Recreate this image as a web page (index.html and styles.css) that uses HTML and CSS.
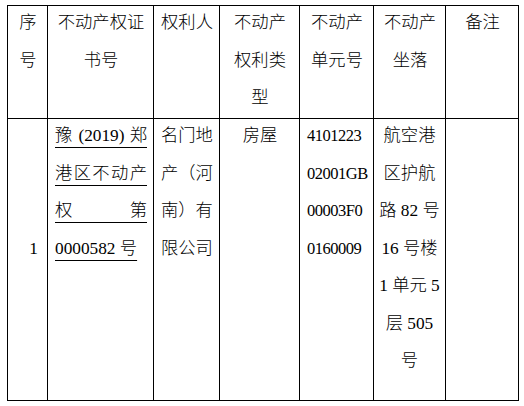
FILE: index.html
```html
<!DOCTYPE html>
<html lang="zh-CN">
<head>
<meta charset="utf-8">
<title>不动产权登记表</title>
<link rel="stylesheet" href="styles.css">
</head>
<body>
<table class="reg">
  <colgroup>
    <col class="c-seq">
    <col class="c-cert">
    <col class="c-owner">
    <col class="c-type">
    <col class="c-unit">
    <col class="c-loc">
    <col class="c-note">
  </colgroup>
  <thead>
    <tr class="head-row">
      <th><div class="txt">序<br>号</div></th>
      <th><div class="txt">不动产权证<br>书号</div></th>
      <th><div class="txt">权利人</div></th>
      <th><div class="txt">不动产<br>权利类<br>型</div></th>
      <th><div class="txt">不动产<br>单元号</div></th>
      <th><div class="txt">不动产<br>坐落</div></th>
      <th><div class="txt">备注</div></th>
    </tr>
  </thead>
  <tbody>
    <tr class="body-row">
      <td class="seq"><div class="txt">1</div></td>
      <td class="cert">
        <div class="txt">
          <div class="jl"><u>豫 (2019) 郑</u></div>
          <div class="jl"><u>港区不动产</u></div>
          <div class="jl"><u>权 第</u></div>
          <div class="ll"><u>0000582 号</u></div>
        </div>
      </td>
      <td class="left"><div class="txt">名门地<br>产（河<br>南）有<br>限公司</div></td>
      <td class="center"><div class="txt">房屋</div></td>
      <td class="unit"><div class="txt">4101223<br>02001GB<br>00003F0<br>0160009</div></td>
      <td class="loc"><div class="txt">航空港<br>区护航<br>路 82 号<br>16 号楼<br>1 单元 5<br>层 505<br>号</div></td>
      <td></td>
    </tr>
  </tbody>
</table>
</body>
</html>
```

FILE: styles.css
```css
html, body {
  margin: 0;
  padding: 0;
  background: #ffffff;
}

body {
  padding: 5px 0 0 7px;
  font-family: "Liberation Serif", "Noto Sans CJK SC", serif;
  font-size: 17.3px;
  font-weight: 300;
  color: #000000;
}

.reg {
  border-collapse: collapse;
  table-layout: fixed;
  width: 512px;
}

.c-seq { width: 40px; }
.c-cert { width: 106px; }
.c-owner { width: 66px; }
.c-type { width: 80px; }
.c-unit { width: 74px; }
.c-loc { width: 72px; }
.c-note { width: 73px; }

.reg th,
.reg td {
  border: 1px solid #000000;
  padding: 0 6px 0 7px;
  vertical-align: top;
  line-height: 37.5px;
  font-weight: 300;
}

.txt {
  margin-top: -2px;
}

.reg th {
  text-align: center;
}

.head-row { height: 113px; }
.body-row { height: 282px; }

.reg .seq {
  text-align: right;
  padding-right: 9px;
  padding-top: 112.5px;
}

.left { text-align: left; }
.center { text-align: center; }

.reg .unit {
  text-align: left;
  white-space: nowrap;
  font-size: 16.5px;
  letter-spacing: -0.5px;
  padding: 0 0 0 7px;
}

.reg .loc {
  text-align: center;
  white-space: nowrap;
  padding: 0 2px;
}

.cert u {
  text-decoration: underline;
  text-decoration-thickness: 1px;
  text-underline-offset: 6px;
}

.jl {
  text-align: justify;
  text-align-last: justify;
}

.ll {
  text-align: left;
}
```
